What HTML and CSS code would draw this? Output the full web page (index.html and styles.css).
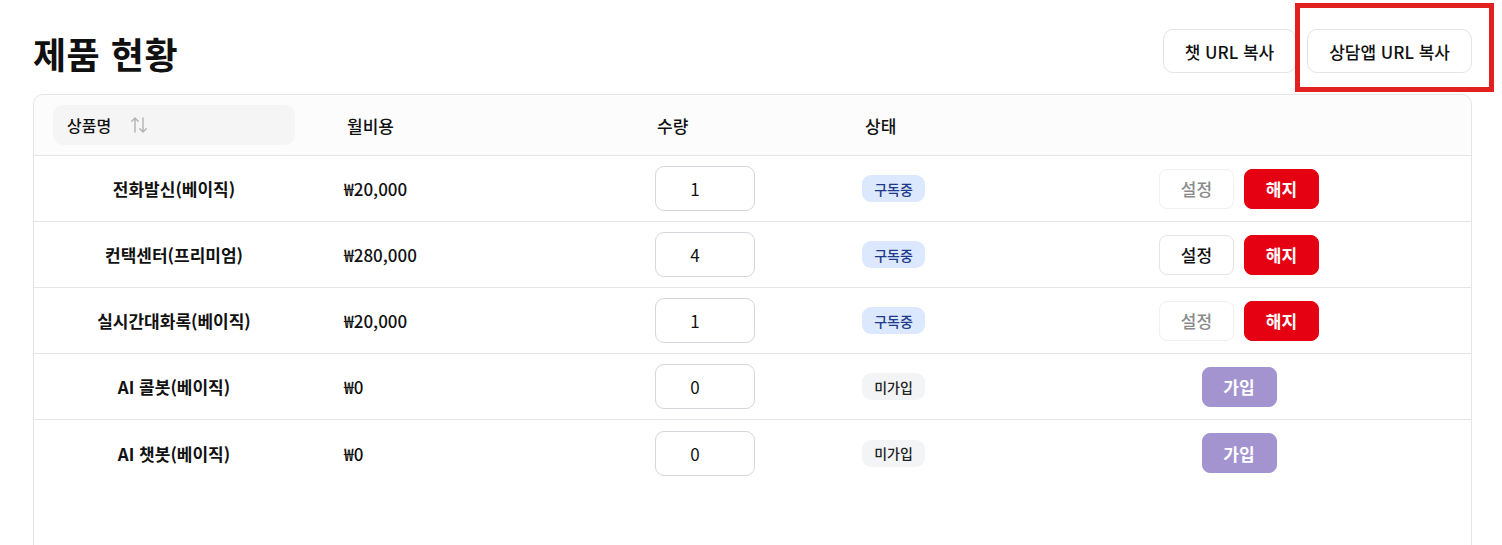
FILE: index.html
```html
<!DOCTYPE html>
<html lang="ko">
<head>
<meta charset="utf-8">
<title>제품 현황</title>
<link rel="stylesheet" href="styles.css">
</head>
<body>
<div class="page">
  <header class="top">
    <h1 class="title">제품 현황</h1>
    <div class="top-actions">
      <button class="btn-outline">챗 URL 복사</button>
      <button class="btn-outline">상담앱 URL 복사</button>
    </div>
  </header>
  <span class="highlight"></span>

  <section class="card">
    <div class="row head">
      <div class="cell c-name"><div class="sort-cell">상품명 <svg class="sort" width="20" height="20" viewBox="0 0 20 20" fill="none" stroke="#b5b5b5" stroke-width="1.5" stroke-linecap="round" stroke-linejoin="round"><path d="M6 17V3M2.8 6.2L6 3l3.2 3.2"/><path d="M14 3v14M10.8 13.8L14 17l3.2-3.2"/></svg></div></div>
      <div class="cell c-price">월비용</div>
      <div class="cell c-qty">수량</div>
      <div class="cell c-status">상태</div>
      <div class="cell c-act"></div>
    </div>

    <div class="row">
      <div class="cell c-name"><span class="name">전화발신(베이직)</span></div>
      <div class="cell c-price">₩20,000</div>
      <div class="cell c-qty"><input class="qty" value="1"></div>
      <div class="cell c-status"><span class="badge on">구독중</span></div>
      <div class="cell c-act"><button class="btn-sm disabled">설정</button><button class="btn-sm red">해지</button></div>
    </div>

    <div class="row">
      <div class="cell c-name"><span class="name">컨택센터(프리미엄)</span></div>
      <div class="cell c-price">₩280,000</div>
      <div class="cell c-qty"><input class="qty" value="4"></div>
      <div class="cell c-status"><span class="badge on">구독중</span></div>
      <div class="cell c-act"><button class="btn-sm">설정</button><button class="btn-sm red">해지</button></div>
    </div>

    <div class="row">
      <div class="cell c-name"><span class="name">실시간대화록(베이직)</span></div>
      <div class="cell c-price">₩20,000</div>
      <div class="cell c-qty"><input class="qty" value="1"></div>
      <div class="cell c-status"><span class="badge on">구독중</span></div>
      <div class="cell c-act"><button class="btn-sm disabled">설정</button><button class="btn-sm red">해지</button></div>
    </div>

    <div class="row">
      <div class="cell c-name"><span class="name">AI 콜봇(베이직)</span></div>
      <div class="cell c-price">₩0</div>
      <div class="cell c-qty"><input class="qty" value="0"></div>
      <div class="cell c-status"><span class="badge off">미가입</span></div>
      <div class="cell c-act"><button class="btn-sm purple">가입</button></div>
    </div>

    <div class="row last">
      <div class="cell c-name"><span class="name">AI 챗봇(베이직)</span></div>
      <div class="cell c-price">₩0</div>
      <div class="cell c-qty"><input class="qty" value="0"></div>
      <div class="cell c-status"><span class="badge off">미가입</span></div>
      <div class="cell c-act"><button class="btn-sm purple">가입</button></div>
    </div>
  </section>
</div>
</body>
</html>
```

FILE: styles.css
```css
* { box-sizing: border-box; }
html, body { margin: 0; padding: 0; background: #fff; }
body {
  font-family: "Noto Sans CJK KR", "Noto Sans", sans-serif;
  color: #111;
  font-size: 17px;
}
button, input { font-family: inherit; }

.page {
  position: relative;
  padding: 29px 30px 0 33px;
}

.top {
  display: flex;
  justify-content: space-between;
  align-items: center;
  height: 44px;
}
.title {
  margin: 0;
  font-size: 36px;
  font-weight: 700;
  line-height: 44px;
  padding-top: 4px;
  color: #111;
  letter-spacing: 0.5px;
}
.top-actions {
  display: flex;
  gap: 11px;
}
.btn-outline {
  height: 44px;
  padding: 0 21px;
  background: #fff;
  border: 1px solid #e4e4e7;
  border-radius: 10px;
  font-size: 17px;
  font-weight: 500;
  color: #111;
}
.highlight {
  position: absolute;
  left: 1295px;
  top: 3px;
  width: 199px;
  height: 89px;
  border: 5px solid #e2201f;
  pointer-events: none;
}

.card {
  margin-top: 21px;
  border: 1px solid #e5e5e5;
  border-radius: 10px;
  min-height: 500px;
  padding-bottom: 60px;
}

.row {
  display: grid;
  grid-template-columns: 291px 311px 207px 164px 426px;
  align-items: center;
  height: 66px;
  padding: 0 19px;
  border-bottom: 1px solid #e5e5e5;
}
.row.last { border-bottom: none; }
.row.head {
  height: 61px;
  background: #fcfcfc;
  border-radius: 10px 10px 0 0;
}
.cell { font-size: 17px; }
.head .cell { font-weight: 500; }
.head .c-price, .head .c-status { padding-left: 3px; }
.head .c-qty { padding-left: 2px; }

.sort-cell {
  width: 242px;
  height: 40px;
  background: #f5f5f5;
  border-radius: 10px;
  display: flex;
  align-items: center;
  padding-left: 14px;
  gap: 18px;
  font-size: 16px;
}
.sort { display: block; }

.c-name .name {
  display: block;
  width: 242px;
  text-align: center;
  font-weight: 700;
}
.c-price { font-weight: 500; }

.qty {
  width: 100px;
  height: 45px;
  border: 1px solid #d6d6dc;
  border-radius: 9px;
  text-align: center;
  font-size: 17px;
  color: #111;
  background: #fff;
  outline: none;
  padding: 0 20px 0 0;
}

.badge {
  display: inline-flex;
  align-items: center;
  justify-content: center;
  height: 27px;
  width: 63px;
  border-radius: 9px;
  font-size: 14px;
  font-weight: 500;
}
.badge.on { background: #dbe8fd; color: #1e3a8a; }
.badge.off { background: #f3f4f6; color: #222; }

.c-act {
  display: flex;
  justify-content: center;
  gap: 10px;
}
.btn-sm {
  width: 75px;
  height: 40px;
  border-radius: 8px;
  border: 1px solid #e4e4e7;
  background: #fff;
  font-size: 17px;
  font-weight: 500;
  color: #111;
}
.btn-sm.disabled { color: #8a8a8a; border-color: #f0f0f0; }
.btn-sm.red { background: #e50012; border-color: #e50012; color: #fff; font-weight: 700; }
.btn-sm.purple { background: #a394d0; border-color: #a394d0; color: #fff; font-weight: 700; }
```
